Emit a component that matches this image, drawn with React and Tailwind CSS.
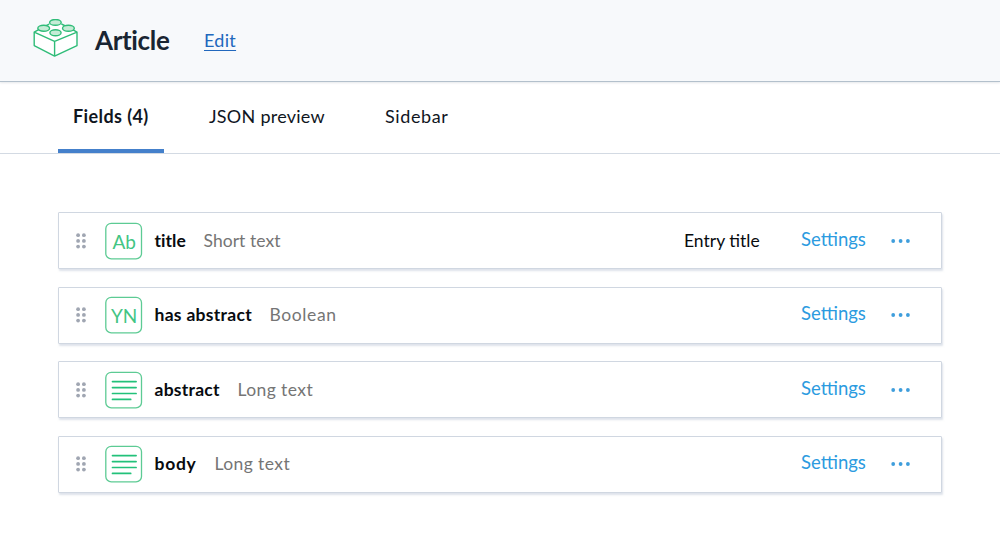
import React from 'react';

const fields = [
  { name: 'title', type: 'Short text', icon: 'Ab', entryTitle: true, nameClass: 'w-[31px] tracking-[0.02px]', typeClass: 'tracking-[0.05px]' },
  { name: 'has abstract', type: 'Boolean', icon: 'YN', nameClass: 'w-[97px] tracking-[0.3px]', typeClass: 'tracking-[0.6px]' },
  { name: 'abstract', type: 'Long text', icon: 'lines', nameClass: 'w-[65px] tracking-[0.26px]', typeClass: 'tracking-[0.4px]' },
  { name: 'body', type: 'Long text', icon: 'lines', nameClass: 'w-[42px] tracking-[0.7px]', typeClass: 'tracking-[0.4px]' },
];

function BrickIcon() {
  return (
    <svg className="h-[40px] w-[46px] shrink-0" viewBox="0 0 46 40" fill="none" stroke="#2fbc78" strokeWidth="1.4" strokeLinejoin="round">
      <path fill="#fff" d="M1.2 13.1 22.2 1.5 44 13.1V26.6L21.6 37.4 1.2 26.6Z" stroke="none" />
      <path d="M6.2 10.4 1.2 13.1V26.6L21.6 37.1 44 26.6V13.1L39.6 10.6M16.2 5.2 12.2 7.1M28.4 5 33.3 7.3M1.2 13.1 21.6 22.4 44 13.1M21.6 22.4V37.1" />
      <g fill="#c5ecd6">
        <ellipse cx="22.4" cy="3.4" rx="5.8" ry="2.9" />
        <ellipse cx="10.7" cy="9.2" rx="5.9" ry="3" />
        <ellipse cx="35.4" cy="9.2" rx="5.9" ry="3" />
        <ellipse cx="22.5" cy="13.7" rx="5.6" ry="3" />
      </g>
    </svg>
  );
}

function DragHandle() {
  return (
    <svg className="h-[16px] w-[10px] shrink-0" viewBox="0 0 10 16" fill="#a0a6b2">
      {[2.2, 7.9, 13.6].map((y) => (
        <g key={y}>
          <circle cx="2.1" cy={y} r="1.9" />
          <circle cx="7.9" cy={y} r="1.9" />
        </g>
      ))}
    </svg>
  );
}

function FieldIcon({ kind }) {
  return (
    <svg className="h-[38px] w-[38px] shrink-0" viewBox="0 0 38 38" fill="none">
      <rect x="0.8" y="1.3" width="35.7" height="35.6" rx="5.5" stroke="#5dcb94" strokeWidth="1.3" />
      {kind === 'lines' ? (
        <path d="M7.5 10.6h23.6M7.5 16.6h23.6M7.5 22.5h23.6M7.5 28.4h18.2" stroke="#22c17a" strokeWidth="1.7" strokeLinecap="round" />
      ) : (
        <text x="19.2" y="27" textAnchor="middle" fontSize="19" fill="#43c584">{kind}</text>
      )}
    </svg>
  );
}

function FieldRow({ field }) {
  return (
    <div className="flex h-[57px] items-center rounded-[1px] border border-[#d0d7e1] bg-white pl-[17px] pr-[30px] text-[17.5px] leading-[24px] whitespace-nowrap shadow-[1px_2px_2px_rgba(190,200,215,0.5)]">
      <DragHandle />
      <div className="ml-[19px] flex">
        <FieldIcon kind={field.icon} />
      </div>
      <span className={`ml-[11.5px] font-bold text-[#080b0f] ${field.nameClass}`}>{field.name}</span>
      <span className={`ml-[18px] text-[#757575] ${field.typeClass}`}>{field.type}</span>
      <span className="grow" />
      {field.entryTitle && <span className="mr-[41px] w-[76px] text-[#080b0f]">Entry title</span>}
      <span className="w-[65px] pb-[4px] text-[18.5px] text-[#2b9be0]">Settings</span>
      <svg className="ml-[25px] h-[4px] w-[20px]" viewBox="0 0 20 4" fill="#3f9edc">
        <circle cx="2.2" cy="2" r="1.9" />
        <circle cx="9.6" cy="2" r="1.9" />
        <circle cx="16.9" cy="2" r="1.9" />
      </svg>
    </div>
  );
}

export default function App() {
  return (
    <div className="h-[549px] overflow-hidden bg-white font-['Lato',sans-serif] text-[#10161e]">
      <header className="flex h-[82px] items-start border-b border-[#b3c0cc] bg-[#f7f9fb] pl-[33px] shadow-[0_1px_2px_rgba(150,160,170,0.25)]">
        <div className="pt-[19px]">
          <BrickIcon />
        </div>
        <h1 className="mt-[24px] ml-[16px] w-[75px] text-[26px] leading-[32px] font-bold tracking-[-0.35px] whitespace-nowrap text-[#192532]">Article</h1>
        <a className="mt-[28px] ml-[34px] text-[18px] leading-[24px] tracking-[0.3px] text-[#2168bd] underline decoration-1 underline-offset-[3px]">Edit</a>
      </header>
      <nav className="flex h-[72px] border-b border-[#d3dae3] pl-[58px] text-[18px] leading-[24px] whitespace-nowrap">
        <div className="w-[106px] border-b-[4px] border-[#4480cb] pt-[22px] pl-[15px] font-bold tracking-[0.4px]">Fields (4)</div>
        <div className="ml-[45px] w-[116px] pt-[22px] tracking-[0.25px]">JSON preview</div>
        <div className="ml-[60px] pt-[22px] tracking-[0.6px]">Sidebar</div>
      </nav>
      <main className="flex flex-col gap-[17.4px] px-[58px] pt-[58.4px]">
        {fields.map((field) => (
          <FieldRow key={field.name} field={field} />
        ))}
      </main>
    </div>
  );
}
